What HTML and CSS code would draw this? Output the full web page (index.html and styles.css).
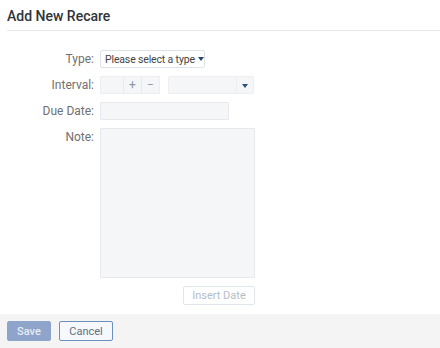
FILE: index.html
```html
<!DOCTYPE html>
<html lang="en">
<head>
  <meta charset="UTF-8">
  <meta name="viewport" content="width=device-width, initial-scale=1.0">
  <title>Add New Recare</title>
  <link rel="stylesheet" href="styles.css">
</head>
<body>
  <div class="dialog">
    <div class="content">
      <h2 class="title">Add New Recare</h2>

      <form class="form">
        <div class="row">
          <label>Type:</label>
          <div class="select type-select">Please select a type<span class="caret"></span></div>
        </div>

        <div class="row">
          <label>Interval:</label>
          <div class="stepper">
            <span class="num"></span>
            <span class="btn">+</span>
            <span class="btn">&minus;</span>
          </div>
          <div class="select unit-select">
            <span class="fill"></span>
            <span class="arrow"><span class="caret"></span></span>
          </div>
        </div>

        <div class="row">
          <label>Due Date:</label>
          <div class="field date"></div>
        </div>

        <div class="row">
          <label>Note:</label>
          <div class="field note"></div>
        </div>

        <div class="row">
          <label></label>
          <div class="insert-wrap">
            <button type="button" class="insert">Insert Date</button>
          </div>
        </div>
      </form>
    </div>

    <div class="footer">
      <button type="button" class="save">Save</button>
      <button type="button" class="cancel">Cancel</button>
    </div>
  </div>
</body>
</html>
```

FILE: styles.css
```css
body {
  margin: 0;
  font-family: Roboto, 'Liberation Sans', sans-serif;
  background-color: white;
  color: #333;
}
.dialog {
  height: 348px;
  display: flex;
  flex-direction: column;
}
.content {
  flex: 1;
  padding: 0 0 0 7px;
}
.title {
  margin: 0;
  padding: 9px 0 6px;
  font-size: 14px;
  font-weight: 500;
  color: #2f333a;
  border-bottom: 1px solid #e6e7e9;
  line-height: 15px;
}
.form {
  padding-top: 19px;
}
.row {
  display: flex;
  align-items: flex-start;
  margin-bottom: 8px;
}
.row label {
  width: 87px;
  text-align: right;
  padding-right: 6px;
  font-size: 12px;
  color: #707070;
  line-height: 18px;
}
.select {
  box-sizing: border-box;
  height: 18px;
  border: 1px solid #dde3ea;
  border-radius: 2px;
  font-size: 10.5px;
  color: #444;
  display: flex;
  align-items: center;
  white-space: nowrap;
}
.type-select {
  width: 105px;
  padding-left: 4px;
  background: white;
  letter-spacing: -0.15px;
}
.caret {
  display: inline-block;
  width: 0;
  height: 0;
  margin-left: 3px;
  border-left: 3px solid transparent;
  border-right: 3px solid transparent;
  border-top: 4px solid #27496d;
}
.stepper {
  box-sizing: border-box;
  width: 60px;
  height: 18px;
  display: flex;
  border: 1px solid #eceef1;
  background: #f5f6f8;
}
.stepper .num {
  width: 22px;
  border-right: 1px solid #e8eaed;
}
.stepper .btn {
  flex: 1;
  text-align: center;
  font-size: 12px;
  line-height: 16px;
  color: #8d98a6;
}
.stepper .btn + .btn {
  border-left: 1px solid #e8eaed;
}
.unit-select {
  width: 86px;
  margin-left: 8px;
  border-color: #eceef1;
  background: #f5f6f8;
}
.unit-select .fill {
  flex: 1;
  height: 100%;
  border-right: 1px solid #eceef1;
}
.unit-select .arrow {
  width: 16px;
  text-align: center;
  line-height: 10px;
}
.unit-select .caret {
  margin: 0;
  border-top-color: #2b5278;
}
.field {
  box-sizing: border-box;
  border: 1px solid #e7e9ec;
  background: #f5f6f8;
  border-radius: 1px;
}
.date {
  width: 129px;
  height: 18px;
}
.note {
  width: 155px;
  height: 150px;
}
.insert-wrap {
  width: 155px;
  display: flex;
  justify-content: flex-end;
}
.insert {
  width: 72px;
  height: 19px;
  border: 1px solid #dfe6ee;
  background: white;
  color: #b5bcc5;
  font-family: Roboto, 'Liberation Sans', sans-serif;
  font-size: 11px;
  border-radius: 2px;
  padding: 0;
}
.footer {
  height: 34px;
  box-sizing: border-box;
  background: #f4f4f4;
  padding: 7px 7px 0;
  display: flex;
  gap: 8px;
  align-items: flex-start;
}
.footer button {
  height: 20px;
  font-family: Roboto, 'Liberation Sans', sans-serif;
  font-size: 11px;
  border-radius: 2px;
  padding: 0;
}
.save {
  width: 44px;
  background: #8fa4cb;
  color: #e6ebf4;
  border: 1px solid #8fa4cb;
  font-weight: 500;
}
.cancel {
  width: 54px;
  background: #f5f8fc;
  color: #5e6f85;
  border: 1px solid #6d8fbd;
}
```
